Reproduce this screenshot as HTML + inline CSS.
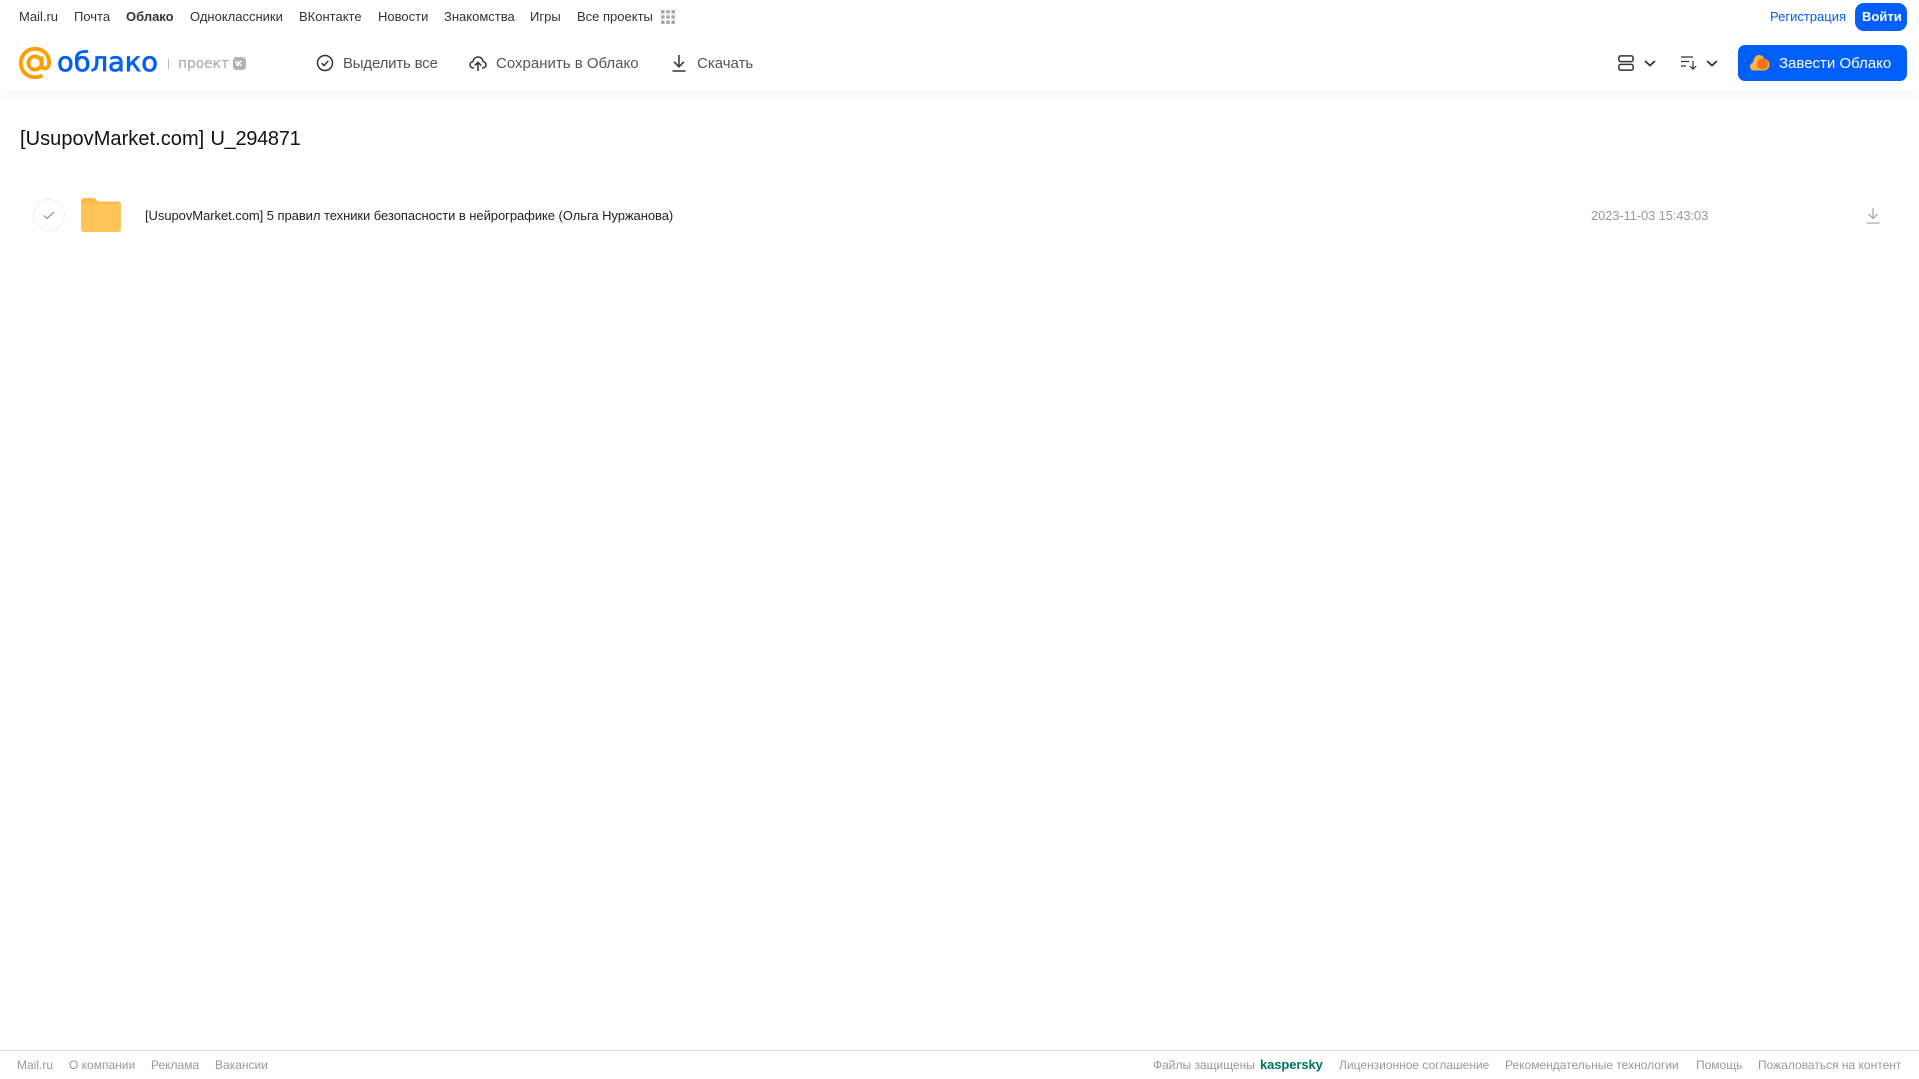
<!DOCTYPE html>
<html lang="ru">
<head>
<meta charset="utf-8">
<title>Облако</title>
<style>
html,body{margin:0;padding:0;background:#fff;width:1919px;height:1079px;overflow:hidden;font-family:"Liberation Sans",sans-serif}
body{position:relative}
.t{position:absolute;white-space:nowrap;line-height:20px;height:20px}
.n{top:7px;font-size:13px;color:#333}
.b{top:54px;font-size:15px;color:#555}
.f{top:1055px;font-size:12px;color:#999}
svg{position:absolute;overflow:visible}
#hdr{position:absolute;left:0;top:0;width:1919px;height:91px;background:#fff;box-shadow:0 2px 14px rgba(0,0,0,.06)}
</style>
</head>
<body>
<div id="hdr"></div>
<span class="t n" style="left:19px">Mail.ru</span>
<span class="t n" style="left:74px">Почта</span>
<span class="t n" style="left:126px;font-weight:bold">Облако</span>
<span class="t n" style="left:190px">Одноклассники</span>
<span class="t n" style="left:299px">ВКонтакте</span>
<span class="t n" style="left:378px">Новости</span>
<span class="t n" style="left:444px">Знакомства</span>
<span class="t n" style="left:530px">Игры</span>
<span class="t n" style="left:577px">Все проекты</span>
<svg style="left:661px;top:10px" width="14" height="14" fill="#aaa">
<rect x="0" y="0" width="3.6" height="3.6" rx=".8"/><rect x="5.2" y="0" width="3.6" height="3.6" rx=".8"/><rect x="10.4" y="0" width="3.6" height="3.6" rx=".8"/>
<rect x="0" y="5.2" width="3.6" height="3.6" rx=".8"/><rect x="5.2" y="5.2" width="3.6" height="3.6" rx=".8"/><rect x="10.4" y="5.2" width="3.6" height="3.6" rx=".8"/>
<rect x="0" y="10.4" width="3.6" height="3.6" rx=".8"/><rect x="5.2" y="10.4" width="3.6" height="3.6" rx=".8"/><rect x="10.4" y="10.4" width="3.6" height="3.6" rx=".8"/>
</svg>
<span class="t n" style="left:1770px;color:#005ff9">Регистрация</span>
<div style="position:absolute;left:1855px;top:3px;width:52px;height:28px;border-radius:9px;background:#005ff9"></div>
<span class="t n" style="left:1862px;color:#fff;font-weight:bold">Войти</span>

<!-- logo -->
<svg style="left:19px;top:47px" width="32" height="32" viewBox="0 0 32 32" fill="none" stroke="#ff9e00" stroke-width="3.8">
<circle cx="16" cy="16" r="6.6"/>
<path d="M22.6 9.6V18c0 5 6.8 4.6 7.4-.8C31 8.5 25 1.8 16 1.8 8 1.8 1.8 8 1.8 16S8 30.2 16 30.2c3 0 5.200-.7 7.300-2"/>
</svg>
<svg style="left:0;top:0" width="300" height="91">
<text x="57" y="71" font-family="'DejaVu Sans',sans-serif" font-size="27" stroke="#005ff9" stroke-width=".7" fill="#005ff9" textLength="101" lengthAdjust="spacingAndGlyphs">облако</text>
</svg>
<div style="position:absolute;left:168px;top:59px;width:1px;height:10px;background:#bbb"></div>
<svg style="left:0;top:0" width="300" height="91">
<text x="178" y="68" font-family="'DejaVu Sans',sans-serif" font-size="14" fill="#b3b3b3" stroke="#b3b3b3" stroke-width=".3" textLength="51" lengthAdjust="spacingAndGlyphs">проект</text>
<rect x="233" y="57" width="13" height="13" rx="3.5" fill="#b3b3b3"/>
<path d="M235.500 61l1.800 4.500h1V61M239 63.300l2.300-2.300M239 63.300l2.600 2.400" fill="none" stroke="#fff" stroke-width="1.300"/>
</svg>

<!-- toolbar -->
<svg style="left:316px;top:54px" width="18" height="18" viewBox="0 0 18 18" fill="none" stroke="#333" stroke-width="1.500">
<circle cx="9" cy="9" r="7.500"/><path d="M5.700 9.200l2.300 2.300 4.300-4.600"/>
</svg>
<span class="t b" style="left:343px;letter-spacing:-.2px">Выделить все</span>
<svg style="left:469px;top:54px" width="18" height="18" viewBox="0 0 18 18" fill="none" stroke="#333" stroke-width="1.500">
<path d="M5 14H4.300C2.300 14 1 12.500 1 10.800c0-1.700 1.200-3 2.900-3.200C4.300 5 6.300 3 9 3s4.700 2 5.100 4.600c1.700.2 2.900 1.500 2.900 3.200 0 1.700-1.300 3.200-3.300 3.200H13"/>
<path d="M9 17V8.500M5.800 11.500L9 8.300l3.200 3.200"/>
</svg>
<span class="t b" style="left:496px">Сохранить в Облако</span>
<svg style="left:671px;top:54px" width="16" height="18" viewBox="0 0 16 18" fill="none" stroke="#333" stroke-width="1.500">
<path d="M8 1v11.500M3 7.800l5 5 5-5M1.500 17h13"/>
</svg>
<span class="t b" style="left:697px">Скачать</span>

<!-- right toolbar -->
<svg style="left:1618px;top:55px" width="16" height="16" viewBox="0 0 16 16" fill="none" stroke="#333" stroke-width="1.500">
<rect x=".9" y=".9" width="14.200" height="5.700" rx="1.800"/><rect x=".9" y="9.400" width="14.200" height="5.700" rx="1.800"/>
</svg>
<svg style="left:1644px;top:60px" width="12" height="7" fill="none" stroke="#333" stroke-width="1.800"><path d="M1 1l5 4.500L11 1"/></svg>
<svg style="left:1681px;top:56px" width="16" height="14" viewBox="0 0 16 14" fill="none" stroke="#333" stroke-width="1.200">
<path d="M0 1h12M0 5.500h8M0 10h5M12 5v8M8.800 10l3.200 3.200 3.200-3.200"/>
</svg>
<svg style="left:1706px;top:60px" width="12" height="7" fill="none" stroke="#333" stroke-width="1.800"><path d="M1 1l5 4.500L11 1"/></svg>
<div style="position:absolute;left:1738px;top:45px;width:169px;height:36px;border-radius:7px;background:#005ff9"></div>
<svg style="left:1750px;top:54px" width="20" height="17" viewBox="0 0 20 17">
<path d="M4 16.500C1.800 16.500 0 14.800 0 12.500c0-1.900 1.300-3.500 3-3.900C3.300 5 5.500 1 9 1c2.500 0 4.500 1.500 5.300 3.800 3 .3 5.200 2.800 5.200 5.800 0 3.300-2.600 5.900-5.800 5.900z" fill="#ffb23e"/>
<circle cx="12.500" cy="9.800" r="5.600" fill="#f2741f"/>
</svg>
<span class="t b" style="left:1779px;color:#fff">Завести Облако</span>

<!-- content -->
<span class="t" style="left:20px;top:126px;height:26px;line-height:26px;font-size:20px;color:#111;letter-spacing:.05px">[UsupovMarket.com]</span>
<span class="t" style="left:210.500px;top:126px;height:26px;line-height:26px;font-size:20px;color:#111;letter-spacing:-.3px">U_294871</span>
<div style="position:absolute;left:33px;top:199px;width:30px;height:30px;border:1px solid #eee;border-radius:50%"></div>
<svg style="left:43px;top:211px" width="12" height="9" fill="none" stroke="#999" stroke-width="1.300"><path d="M1 4.500l3 3 7-6.500"/></svg>
<svg style="left:81px;top:198px" width="40" height="34" viewBox="0 0 40 34">
<path d="M0 3a3 3 0 0 1 3-3h9c2 0 3 1 4 2.500.5.800 1 1 2 1H37a3 3 0 0 1 3 3V31a3 3 0 0 1-3 3H3a3 3 0 0 1-3-3z" fill="#ffb94d"/>
<path d="M0 9a3 3 0 0 1 3-3h34a3 3 0 0 1 3 3v22a3 3 0 0 1-3 3H3a3 3 0 0 1-3-3z" fill="#ffc557"/>
</svg>
<span class="t" style="left:145px;top:206px;font-size:13px;color:#222;letter-spacing:-.055px">[UsupovMarket.com] 5 правил техники безопасности в нейрографике (Ольга Нуржанова)</span>
<span class="t" style="left:1591px;top:206px;font-size:13px;color:#999;letter-spacing:-.14px">2023-11-03 15:43:03</span>
<svg style="left:1866px;top:207px" width="14" height="17" viewBox="0 0 14 17" fill="none" stroke="#aaa" stroke-width="1.300">
<path d="M7 1v10.500M2.500 7l4.500 4.500L11.500 7M0.500 16h13"/>
</svg>

<!-- footer -->
<div style="position:absolute;left:0;top:1050px;width:1919px;height:1px;background:#ddd"></div>
<span class="t f" style="left:17px">Mail.ru</span>
<span class="t f" style="left:69px">О компании</span>
<span class="t f" style="left:151px">Реклама</span>
<span class="t f" style="left:215px">Вакансии</span>
<span class="t f" style="left:1153px">Файлы защищены</span>
<span class="t f" style="left:1260px;color:#00745f;font-weight:bold;font-size:13px;letter-spacing:-.1px">kaspersky</span>
<span class="t f" style="left:1339px">Лицензионное соглашение</span>
<span class="t f" style="left:1505px">Рекомендательные технологии</span>
<span class="t f" style="left:1696px">Помощь</span>
<span class="t f" style="left:1758px">Пожаловаться на контент</span>
</body>
</html>
